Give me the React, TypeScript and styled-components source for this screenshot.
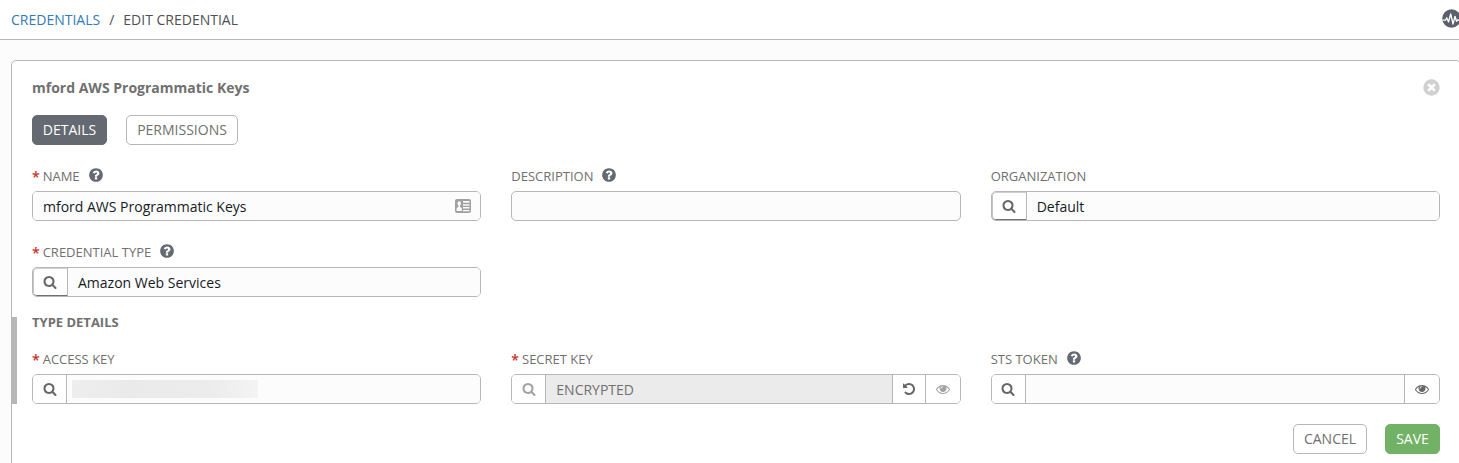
import React from "react";
import styled, { createGlobalStyle } from "styled-components";

const GlobalStyle = createGlobalStyle`
  *, *::before, *::after { box-sizing: border-box; }
  html, body { margin: 0; overflow: hidden; background: #fcfcfc; }
  body, input, button { font-family: "Open Sans", "Noto Sans", sans-serif; font-size: 14px; }
`;

const Page = styled.div`
  height: 463px;
  overflow: hidden;
  background: #fcfcfc;
  color: #707070;
`;

const TopBar = styled.header`
  display: flex;
  align-items: center;
  justify-content: space-between;
  height: 40px;
  padding-left: 11px;
  background: #fff;
  border-bottom: 1px solid #b7b7b7;
`;

const Crumbs = styled.nav`
  display: flex;
  gap: 9px;
  font-size: 14px;
  line-height: 18px;
  white-space: nowrap;
  color: #505050;
`;

const CrumbLink = styled.a`
  color: #337ab7;
`;

const ActivityButton = styled.span`
  display: flex;
  flex: none;
  margin: -3px -2px 0 0;
`;

const Panel = styled.main`
  width: 1450px;
  height: 440px;
  margin: 20px 0 0 11px;
  padding: 0 20px;
  background: #fff;
  border: 1px solid #b7b7b7;
  border-radius: 5px;
`;

const PanelHeader = styled.div`
  display: flex;
  align-items: center;
  justify-content: space-between;
  height: 54px;
`;

const Title = styled.h1`
  margin: 0;
  font-size: 14px;
  font-weight: 700;
  line-height: 20px;
`;

const ButtonRow = styled.div<{ $end?: boolean; $gap: number }>`
  display: flex;
  justify-content: ${(p) => (p.$end ? "flex-end" : "flex-start")};
  gap: ${(p) => p.$gap}px;
  margin-top: ${(p) => (p.$end ? 20 : 0)}px;
`;

const Button = styled.button<{ $tone?: "dark" | "green"; $width: number }>`
  width: ${(p) => p.$width}px;
  height: 30px;
  padding: 0 0 2px;
  border: 1px solid ${(p) => (p.$tone === "dark" ? "#646972" : p.$tone === "green" ? "#71b266" : "#b7b7b7")};
  border-radius: 5px;
  background: ${(p) => (p.$tone === "dark" ? "#646972" : p.$tone === "green" ? "#71b266" : "#fff")};
  color: ${(p) => (p.$tone ? "#fff" : "#707070")};
  white-space: nowrap;
`;

const FieldGrid = styled.div<{ $top?: number }>`
  display: grid;
  grid-template-columns: repeat(3, 1fr);
  column-gap: 30px;
  margin-top: ${(p) => p.$top ?? 0}px;
`;

const Field = styled.div`
  min-width: 0;
`;

const Label = styled.label`
  display: flex;
  align-items: center;
  height: 22px;
  margin-bottom: 4px;
  font-size: 13px;
  white-space: nowrap;
`;

const Required = styled.span`
  margin-right: 3px;
  color: #c9302c;
  font-size: 14px;
  font-weight: 600;
`;

const HelpMark = styled.span`
  display: flex;
  margin: -2px 0 0 8px;
  color: #646972;
`;

const InputGroup = styled.div`
  display: flex;
  height: 30px;
  background: #fcfcfc;
  border: 1px solid #b7b7b7;
  border-radius: 5px;
  overflow: hidden;
`;

const TextArea = styled.div<{ $disabled?: boolean }>`
  display: flex;
  flex: 1;
  align-items: center;
  justify-content: space-between;
  min-width: 0;
  padding: 0 9px 0 10px;
  background: ${(p) => (p.$disabled ? "#ebebeb" : "#fcfcfc")};
  color: ${(p) => (p.$disabled ? "#707070" : "#161b1f")};
  white-space: nowrap;
`;

const Addon = styled.span<{ $side?: "left" | "right"; $muted?: boolean; $active?: boolean; $width?: number }>`
  display: flex;
  align-items: center;
  justify-content: center;
  flex: none;
  width: ${(p) => p.$width ?? 34}px;
  background: #fff;
  color: #666;
  border-${(p) => (p.$side === "right" ? "left" : "right")}: 1px solid #b7b7b7;
  ${(p) => p.$muted && "svg { opacity: 0.6; }"}
  ${(p) =>
    p.$active &&
    "box-shadow: inset 1px 0 #c4c4c4, inset 0 1px #d0d0d0, inset 0 -1px #707070; border-radius: 4px 0 0 4px;"}
`;

const Redacted = styled.span`
  width: 186px;
  height: 18px;
  margin-left: -5px;
  background: linear-gradient(90deg, #eeeeee, #eaeaeb 30%, #ececed 75%, #f4f4f4);
`;

const Section = styled.section`
  height: 87px;
  margin: 20px 0 0 -20px;
  padding-left: 15px;
  border-left: 5px solid #b7b7b7;
`;

const SectionTitle = styled.h2`
  height: 11px;
  margin: 0 0 20px;
  font-size: 13px;
  font-weight: 700;
  line-height: 11px;
`;

const paths = {
  search:
    "M1216 832q0-185-131.5-316.5t-316.5-131.5-316.5 131.5-131.5 316.5 131.5 316.5 316.5 131.5 316.5-131.5 131.5-316.5zm512 832q0 52-38 90t-90 38q-54 0-90-38l-343-342q-179 124-399 124-143 0-273.5-55.5t-225-150-150-225-55.5-273.5 55.5-273.5 150-225 225-150 273.5-55.5 273.5 55.5 225 150 150 225 55.5 273.5q0 220-124 399l343 343q37 37 37 90z",
  eye: "M1664 960q-152-236-381-353 61 104 61 225 0 185-131.5 316.5t-316.5 131.5-316.5-131.5-131.5-316.5q0-121 61-225-229 117-381 353 133 205 333.5 326.5t434.5 121.5 434.5-121.5 333.5-326.5zm-720-384q0-20-14-34t-34-14q-125 0-214.5 89.5t-89.5 214.5q0 20 14 34t34 14 34-14 14-34q0-86 61-147t147-61q20 0 34-14t14-34zm848 384q0 34-20 69-140 230-376.5 368.5t-499.5 138.5-499.5-139-376.5-368q-20-35-20-69t20-69q140-229 376.5-368t499.5-139 499.5 139 376.5 368q20 35 20 69z",
  undo: "M1664 896q0 156-61 298t-164 245-245 164-298 61q-172 0-327-72.5t-264-204.5q-7-10-6.5-22.5t8.5-20.5l137-138q10-9 25-9 16 2 23 12 73 95 179 147t225 52q104 0 198.5-40.5t163.5-109.5 109.5-163.5 40.5-198.5-40.5-198.5-109.5-163.5-163.5-109.5-198.5-40.5q-98 0-188 35.5t-160 101.5l137 138q31 30 14 69-17 40-59 40h-448q-26 0-45-19t-19-45v-448q0-42 40-59 39-17 69 14l130 129q107-101 244.5-156.5t284.5-55.5q156 0 298 61t245 164 164 245 61 298z",
  help: "M1024 1376v-192q0-14-9-23t-23-9h-192q-14 0-23 9t-9 23v192q0 14 9 23t23 9h192q14 0 23-9t9-23zm256-672q0-88-55.5-163t-138.5-116-170-41q-243 0-371 213-15 24 8 42l132 100q7 6 19 6 16 0 25-12 53-68 86-92 34-24 86-24 48 0 85.5 26t37.5 59q0 38-20 61t-68 45q-63 28-115.5 86.5t-52.5 125.5v36q0 14 9 23t23 9h192q14 0 23-9t9-23q0-19 21.5-49.5t54.5-49.5q32-18 49-28.5t46-35 44.5-48 28-60.5 12.5-81zm384 192q0 209-103 385.5t-279.5 279.5-385.5 103-385.5-103-279.5-279.5-103-385.5 103-385.5 279.5-279.5 385.5-103 385.5 103 279.5 279.5 103 385.5z",
  close:
    "M1277 1122q0-26-19-45l-181-181 181-181q19-19 19-45 0-27-19-46l-90-90q-19-19-46-19-26 0-45 19l-181 181-181-181q-19-19-45-19-27 0-46 19l-90 90q-19 19-19 46 0 26 19 45l181 181-181 181q-19 19-19 45 0 27 19 46l90 90q19 19 46 19 26 0 45-19l181-181 181 181q19 19 45 19 27 0 46-19l90-90q19-19 19-46zm387-226q0 209-103 385.5t-279.5 279.5-385.5 103-385.5-103-279.5-279.5-103-385.5 103-385.5 279.5-279.5 385.5-103 385.5 103 279.5 279.5 103 385.5z",
};

function Icon({ name, size = 14 }: { name: keyof typeof paths; size?: number }) {
  return (
    <svg width={size} height={size} viewBox="0 0 1792 1792" fill="currentColor" aria-hidden>
      <path d={paths[name]} />
    </svg>
  );
}

const CloseButton = styled.span`
  display: flex;
  margin: -1px -1px 0 0;
  color: #d0d0d0;
`;

function ActivityIcon() {
  return (
    <svg width="19" height="19" viewBox="0 0 19 19" fill="none" aria-hidden>
      <circle cx="9.5" cy="9.5" r="9.3" fill="#5b606b" />
      <path
        d="M0.500 11.200h3l1.300-2.400 1.700 4.200 2.200-8.200 2.300 10.200 2-7.700 1.500 5 1-1.300H18.500"
        stroke="#fff"
        strokeWidth="1.3"
        strokeLinejoin="round"
      />
    </svg>
  );
}

function ContactCardIcon() {
  return (
    <svg width="16" height="14" viewBox="0 0 16 14" aria-hidden>
      <rect x="0" y="0" width="16" height="14" rx="2" fill="#a0a0a0" />
      <ellipse cx="4.200" cy="4.500" rx="1.700" ry="2.300" fill="#fcfcfc" />
      <path d="M3.400 6h1.600v2l1.800 1v3h-5.200V9l1.800-1z" fill="#fcfcfc" />
      <path d="M8 2h6.500v1.700H8zM8 5.200h6.500v1.500H8zM8 8.100h6.500v1.500H8zM8 11h6.500v1.300H8z" fill="#fcfcfc" />
    </svg>
  );
}

function FieldLabel({ text, required, help }: { text: string; required?: boolean; help?: boolean }) {
  return (
    <Label>
      {required && <Required>*</Required>}
      {text}
      {help && (
        <HelpMark>
          <Icon name="help" size={16} />
        </HelpMark>
      )}
    </Label>
  );
}

export default function App() {
  return (
    <Page>
      <GlobalStyle />
      <TopBar>
        <Crumbs>
          <CrumbLink>CREDENTIALS</CrumbLink>
          <span>/</span>
          <span>EDIT CREDENTIAL</span>
        </Crumbs>
        <ActivityButton>
          <ActivityIcon />
        </ActivityButton>
      </TopBar>
      <Panel>
        <PanelHeader>
          <Title>mford AWS Programmatic Keys</Title>
          <CloseButton>
            <Icon name="close" size={19} />
          </CloseButton>
        </PanelHeader>
        <ButtonRow $gap={19}>
          <Button $tone="dark" $width={75}>DETAILS</Button>
          <Button $width={112}>PERMISSIONS</Button>
        </ButtonRow>
        <FieldGrid $top={20}>
          <Field>
            <FieldLabel text="NAME" required help />
            <InputGroup>
              <TextArea>
                mford AWS Programmatic Keys
                <ContactCardIcon />
              </TextArea>
            </InputGroup>
          </Field>
          <Field>
            <FieldLabel text="DESCRIPTION" help />
            <InputGroup />
          </Field>
          <Field>
            <FieldLabel text="ORGANIZATION" />
            <InputGroup>
              <Addon $active $width={35}><Icon name="search" /></Addon>
              <TextArea>Default</TextArea>
            </InputGroup>
          </Field>
        </FieldGrid>
        <FieldGrid $top={20}>
          <Field>
            <FieldLabel text="CREDENTIAL TYPE" required help />
            <InputGroup>
              <Addon $active $width={35}><Icon name="search" /></Addon>
              <TextArea>Amazon Web Services</TextArea>
            </InputGroup>
          </Field>
        </FieldGrid>
        <Section>
          <SectionTitle>TYPE DETAILS</SectionTitle>
          <FieldGrid>
            <Field>
              <FieldLabel text="ACCESS KEY" required />
              <InputGroup>
                <Addon><Icon name="search" /></Addon>
                <TextArea><Redacted /></TextArea>
              </InputGroup>
            </Field>
            <Field>
              <FieldLabel text="SECRET KEY" required />
              <InputGroup>
                <Addon $muted><Icon name="search" /></Addon>
                <TextArea $disabled>ENCRYPTED</TextArea>
                <Addon $side="right" $width={33}><Icon name="undo" /></Addon>
                <Addon $side="right" $muted $width={35}><Icon name="eye" /></Addon>
              </InputGroup>
            </Field>
            <Field>
              <FieldLabel text="STS TOKEN" help />
              <InputGroup>
                <Addon><Icon name="search" /></Addon>
                <TextArea />
                <Addon $side="right" $width={35}><Icon name="eye" /></Addon>
              </InputGroup>
            </Field>
          </FieldGrid>
        </Section>
        <ButtonRow $end $gap={18}>
          <Button $width={74}>CANCEL</Button>
          <Button $tone="green" $width={55}>SAVE</Button>
        </ButtonRow>
      </Panel>
    </Page>
  );
}
